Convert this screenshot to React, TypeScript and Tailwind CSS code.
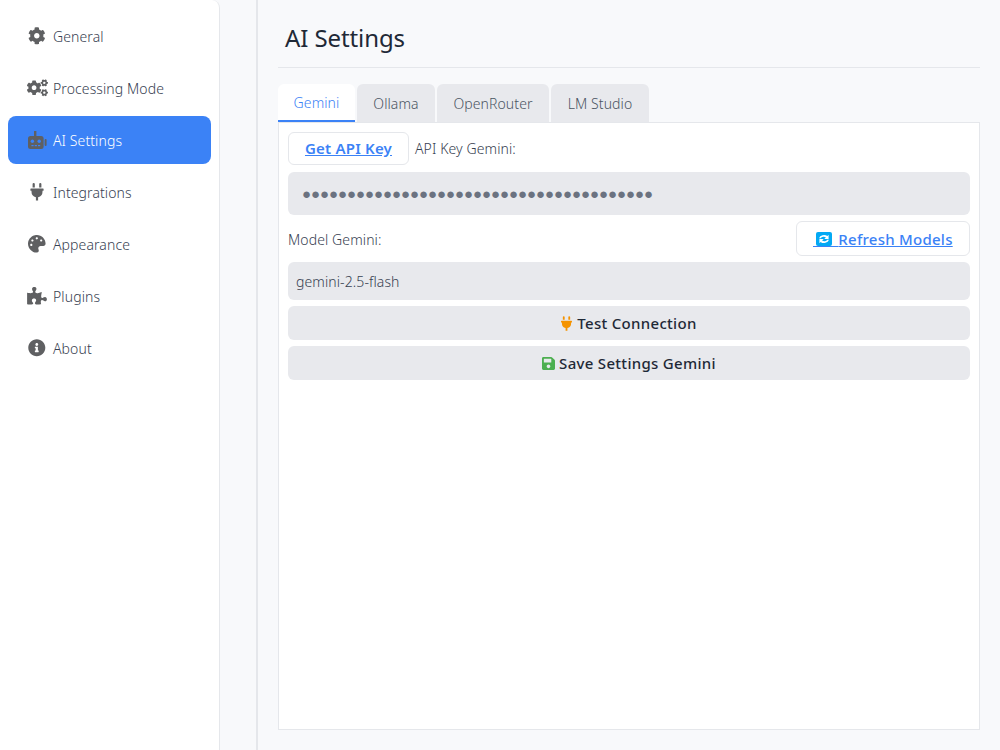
import { FaCog, FaCogs, FaInfoCircle, FaPalette, FaPlug, FaPuzzlePiece, FaSave } from 'react-icons/fa';

// one-eared robot as in the screenshot, the stock glyph has two
function RobotIcon({ className }: { className?: string }) {
  return (
    <svg viewBox="0 0 20 18" className={className} fill="currentColor">
      <rect x="7" y="0" width="2.4" height="6" />
      <rect x="1" y="5" width="15.6" height="13" rx="2.5" />
      <rect x="17.6" y="8" width="2" height="7" rx="1" />
      <circle cx="5.4" cy="10.2" r="1.7" fill="#3b82f6" />
      <circle cx="12.2" cy="10.2" r="1.7" fill="#3b82f6" />
      <rect x="4.4" y="14" width="2.2" height="1.2" fill="#3b82f6" />
      <rect x="7.7" y="14" width="2.2" height="1.2" fill="#3b82f6" />
      <rect x="11" y="14" width="2.2" height="1.2" fill="#3b82f6" />
    </svg>
  );
}

const navItems = [
  { label: 'General', icon: FaCog, size: 'h-[17.6px] w-[17.6px]' },
  { label: 'Processing Mode', icon: FaCogs, size: 'h-[17.6px] w-[21px]' },
  { label: 'AI Settings', icon: RobotIcon, size: 'h-[18px] w-[20px]', active: true },
  { label: 'Integrations', icon: FaPlug, size: 'h-[17.6px] w-[14px]' },
  { label: 'Appearance', icon: FaPalette, size: 'h-[17.6px] w-[17.6px]' },
  { label: 'Plugins', icon: FaPuzzlePiece, size: 'h-[17.6px] w-[20px]' },
  { label: 'About', icon: FaInfoCircle, size: 'h-[17.6px] w-[17.6px]' },
];

const tabs = [
  { label: 'Ollama', width: 'w-[78px]' },
  { label: 'OpenRouter', width: 'w-[112px]' },
  { label: 'LM Studio', width: 'w-[98px]' },
];

// emoji-like icon, the link underline runs beneath it
function RefreshIcon() {
  return (
    <svg viewBox="0 0 25 16" className="h-4 w-[25px] shrink-0">
      <rect x="3" y="0" width="16" height="14" rx="2" fill="#03a9f4" />
      <path d="M6 6.2a5.2 4.6 0 0 1 8.4-2.1L15.6 2.8v4.2h-4.3l1.6-1.6a3.4 3 0 0 0-5.2 0.8z" fill="#fff" />
      <path d="M16 7.8a5.2 4.6 0 0 1-8.4 2.1L6.4 11.2V7h4.3L9.1 8.6a3.4 3 0 0 0 5.2-.8z" fill="#fff" />
      <rect x="0" y="14" width="25" height="1" fill="#3b82f6" />
    </svg>
  );
}

export default function App() {
  return (
    <div className="flex h-[750px] w-[1000px] overflow-hidden bg-[#f8f9fb] font-['Noto_Sans',sans-serif] text-[14px] font-light tracking-[0.1px] text-[#374151]">
      {/* Sidebar */}
      <aside className="w-[220px] shrink-0 rounded-tr-lg border-r border-[#e5e7eb] bg-white pl-2 pr-2 pt-3">
        <nav className="flex flex-col gap-1">
          {navItems.map(({ label, icon: Icon, size, active }) => (
            <div
              key={label}
              className={`flex h-12 items-center rounded-lg pl-[19px] ${
                active ? 'bg-[#3b82f6] text-white' : 'text-[#374151]'
              }`}
            >
              <span className="flex w-5 justify-center text-[#5f6062]">
                <Icon className={`shrink-0 ${size}`} />
              </span>
              <span className="ml-[6px]">{label}</span>
            </div>
          ))}
        </nav>
      </aside>

      {/* Main */}
      <main className="ml-9 flex w-[744px] flex-col border-l-2 border-[#e5e7eb] pl-5 pr-5 pb-5">
        <h1 className="flex h-[68px] items-center border-b border-[#e5e7eb] pl-[7px] pt-[8px] text-[24px] font-normal leading-none tracking-[-0.1px] text-[#1f2937]">
          AI Settings
        </h1>

        <div className="mt-4 flex gap-[2px]">
          <div className="flex h-[38px] w-[77px] items-center justify-center rounded-t-md border-b-2 border-[#3b82f6] bg-white text-[#3b82f6]">
            Gemini
          </div>
          {tabs.map((tab) => (
            <div
              key={tab.label}
              className={`flex h-[38px] items-center justify-center rounded-t-md bg-[#e8e9ed] text-[#4b5563] ${tab.width}`}
            >
              {tab.label}
            </div>
          ))}
        </div>

        <section className="flex flex-1 flex-col gap-[6px] border border-[#e5e7eb] bg-white px-[9px] pt-[9px]">
          <div className="flex items-center gap-[6px]">
            <a className="flex h-[33px] w-[121px] items-center justify-center rounded-md border border-[#e5e7eb] text-[15px] font-semibold tracking-[0.2px] text-[#3b82f6] underline">
              Get API Key
            </a>
            <span>API Key Gemini:</span>
          </div>

          <div className="mt-[1px] flex h-[43px] items-center rounded-md bg-[#e8e9ed] pl-[14px] pt-[1px] font-['Liberation_Sans',sans-serif] text-[15px] tracking-[-0.06px] text-[#6b7280]">
            {'●'.repeat(39)}
          </div>

          <div className="flex items-center justify-between">
            <span className="pt-[2px]">Model Gemini:</span>
            <a className="flex h-[35px] w-[174px] items-center justify-center rounded-md border border-[#e5e7eb] pt-[2px] text-[15px] font-medium tracking-[0.25px] text-[#3b82f6] underline">
              <RefreshIcon />
              Refresh Models
            </a>
          </div>

          <div className="flex h-[38px] items-center rounded-md bg-[#e8e9ed] px-2">gemini-2.5-flash</div>

          <button className="flex h-[34px] items-center justify-center gap-[5px] rounded-md bg-[#e8e9ed] text-[15px] font-medium tracking-[0.3px] text-[#1f2937]">
            <FaPlug className="h-[15px] w-[11px] text-[#f59300]" />
            Test Connection
          </button>

          <button className="flex h-[34px] items-center justify-center gap-[4px] rounded-md bg-[#e8e9ed] text-[15px] font-medium tracking-[0.3px] text-[#1f2937]">
            <FaSave className="h-[15px] w-[13px] text-[#4caf50]" />
            Save Settings Gemini
          </button>
        </section>
      </main>
    </div>
  );
}
